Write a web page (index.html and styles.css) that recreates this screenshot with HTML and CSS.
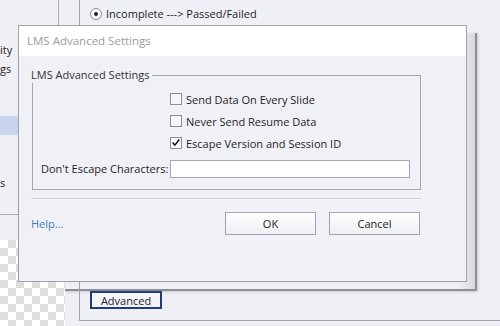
FILE: index.html
```html
<!DOCTYPE html>
<html lang="en">
<head>
    <meta charset="UTF-8">
    <title>LMS Advanced Settings</title>
    <link rel="stylesheet" href="styles.css">
</head>
<body>
    <div class="page">
        <div class="left">
            <div class="sidebar">
                <div class="side-item">ity</div>
                <div class="side-item">gs</div>
                <div class="side-item"></div>
                <div class="side-item"></div>
                <div class="side-item selected"></div>
                <div class="side-item"></div>
                <div class="side-item"></div>
                <div class="side-item">s</div>
            </div>
            <div class="checker"></div>
        </div>

        <div class="main">
            <div class="radio-row">
                <span class="radio"></span>
                Incomplete ---&gt; Passed/Failed
            </div>
            <button class="adv-btn">Advanced</button>
        </div>
    </div>

    <div class="dialog">
        <div class="dialog-title">LMS Advanced Settings</div>
        <div class="dialog-body">
            <fieldset class="group">
                <legend>LMS Advanced Settings</legend>
                <div class="group-grid">
                    <label class="check">
                        <span class="box"></span>
                        Send Data On Every Slide
                    </label>
                    <label class="check">
                        <span class="box"></span>
                        Never Send Resume Data
                    </label>
                    <label class="check">
                        <span class="box">
                            <svg width="12" height="12" viewBox="0 0 12 12">
                                <path d="M2 5.5 L4.6 8.6 L10 1.8" fill="none" stroke="#111" stroke-width="1.8"/>
                            </svg>
                        </span>
                        Escape Version and Session ID
                    </label>
                    <span class="field-label">Don't Escape Characters:</span>
                    <input class="field" type="text">
                </div>
            </fieldset>

            <div class="separator"></div>

            <div class="footer">
                <a class="help" href="#">Help...</a>
                <div class="buttons">
                    <button class="btn">OK</button>
                    <button class="btn">Cancel</button>
                </div>
            </div>
        </div>
    </div>
</body>
</html>
```

FILE: styles.css
```css
* {
    margin: 0;
    padding: 0;
    box-sizing: border-box;
}

body {
    font-family: 'Open Sans', 'Liberation Sans', sans-serif;
    font-size: 11px;
    color: #1e1e1e;
    background: #eff0f6;
    width: 500px;
    height: 326px;
    overflow: hidden;
    position: relative;
}

.page {
    display: flex;
    height: 326px;
}

/* left panel behind the dialog */
.left {
    width: 65px;
    flex-shrink: 0;
}

.sidebar {
    width: 59px;
    height: 215px;
    border-right: 1px solid #a9a9b4;
    border-bottom: 1px solid #a9a9b4;
    padding-top: 40px;
}

.side-item {
    height: 19px;
    line-height: 19px;
    white-space: nowrap;
    overflow: hidden;
}

.side-item.selected {
    background: #c6d4ee;
    margin-right: 3px;
}

.checker {
    margin-top: 25px;
    height: 86px;
    background: repeating-conic-gradient(#dedede 0 25%, #ffffff 0 50%) 0 0 / 16px 16px;
}

.main {
    margin-left: 14px;
    width: 440px;
    height: 321px;
    border-left: 1px solid #a2a2ae;
    border-bottom: 1px solid #a2a2ae;
    display: flex;
    flex-direction: column;
    justify-content: space-between;
    align-items: flex-start;
    padding: 7px 0 11px 10px;
}

.radio-row {
    display: flex;
    align-items: center;
    gap: 4px;
    line-height: 14px;
}

.radio {
    width: 12px;
    height: 12px;
    border: 1px solid #8d8d96;
    border-radius: 50%;
    background: #fff;
    display: flex;
    align-items: center;
    justify-content: center;
}

.radio::after {
    content: "";
    width: 4px;
    height: 4px;
    border-radius: 50%;
    background: #222;
}

.adv-btn {
    font: inherit;
    color: #222;
    width: 72px;
    height: 18px;
    background: #f4f5f9;
    border: 2px solid #1d3e78;
}

/* modal */
.dialog {
    position: absolute;
    left: 18px;
    top: 25px;
    width: 449px;
    height: 257px;
    border: 1px solid #a0a0a8;
    background: #f0f1f7;
}

.dialog::after {
    content: "";
    position: absolute;
    left: 0;
    top: 7px;
    right: -11px;
    bottom: -10px;
    border-right: 2px solid #8e8e96;
    border-bottom: 2px solid #8e8e96;
    background: linear-gradient(90deg, transparent 0, transparent 96%, #d8d8de 100%);
    box-shadow: 1px 1px 3px rgba(0, 0, 0, 0.15);
    z-index: -1;
}

.dialog-title {
    height: 30px;
    line-height: 30px;
    background: #ffffff;
    color: #9b9ba3;
    font-size: 11.5px;
    padding-left: 8px;
}

.dialog-body {
    padding: 11px 0 0 13px;
}

.group {
    width: 389px;
    border: 1px solid #a3a4b0;
    padding: 5px 0 11px 8px;
}

.group legend {
    margin-left: -10px;
    padding-right: 3px;
    line-height: 16px;
    color: #333;
}

.group-grid {
    display: grid;
    grid-template-columns: 129px 240px;
    grid-template-rows: 22px 22px 22px 24px;
    align-items: center;
}

.check {
    grid-column: 2;
    display: flex;
    align-items: center;
    gap: 4px;
}

.box {
    width: 12px;
    height: 12px;
    border: 1px solid #8e8f98;
    background: #f7f7fa;
    display: flex;
    align-items: center;
    justify-content: center;
}

.field-label {
    align-self: end;
    line-height: 18px;
}

.field {
    align-self: end;
    height: 18px;
    border: 1px solid #a4a5b0;
    background: #fff;
    font: inherit;
}

.separator {
    width: 390px;
    margin: 8px 0 0 -1px;
    border-top: 1px solid #cdcdd3;
    border-bottom: 1px solid #f8f8fb;
}

.footer {
    display: flex;
    justify-content: space-between;
    align-items: center;
    width: 389px;
    margin-top: 12px;
    margin-left: -1px;
}

.help {
    color: #3b7dc0;
    text-decoration: none;
}

.buttons {
    display: flex;
    gap: 13px;
}

.btn {
    font: inherit;
    color: #222;
    width: 91px;
    height: 23px;
    border: 1px solid #a2a3ae;
    background: linear-gradient(#ffffff, #eeeff3);
}
```
